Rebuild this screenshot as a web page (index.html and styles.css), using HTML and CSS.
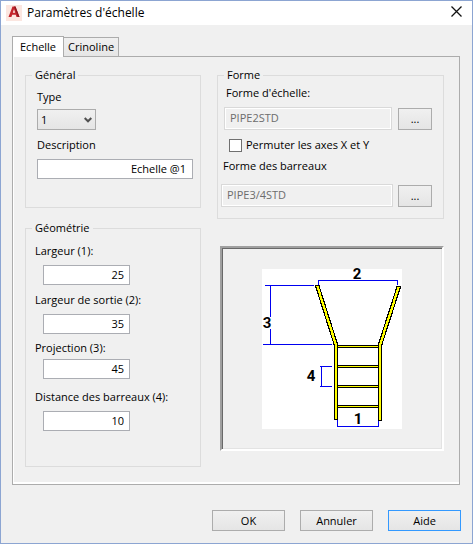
FILE: index.html
```html
<!DOCTYPE html>
<html lang="fr">
<head>
<meta charset="utf-8">
<meta name="viewport" content="width=device-width, initial-scale=1">
<title>Paramètres d'échelle</title>
<link rel="stylesheet" href="styles.css">
</head>
<body>
<form class="dialog">
  <header class="titlebar">
    <svg class="logo" viewBox="0 0 16 16" aria-hidden="true">
      <rect width="16" height="16" fill="#fbe6e0"/>
      <path d="M2.500 12 6.500 1.500h3L13.500 12h-3l-.8-2.300H6.200L5.400 12zM6.800 7.700h2.400L8 4.200z" fill="#c4242b"/>
      <path d="M8 1.500h1.500L13.500 12H12z" fill="#8e1820"/>
    </svg>
    <h1 class="title">Paramètres d'échelle</h1>
    <button class="close" type="button" aria-label="Fermer">
      <svg viewBox="0 0 11 11" aria-hidden="true"><path d="M.5.5l10 10M10.500.5l-10 10" fill="none" stroke="#111" stroke-width="1.300"/></svg>
    </button>
  </header>

  <main class="content">
    <div class="tabs" role="tablist">
      <button class="tab tab-active" type="button" role="tab" aria-selected="true">Echelle</button>
      <button class="tab" type="button" role="tab" aria-selected="false">Crinoline</button>
    </div>
    <div class="panel" role="tabpanel">
      <div class="column">
        <fieldset class="group general">
          <legend>Général</legend>
          <div class="field">
            <label for="type">Type</label>
            <div class="select-wrap">
              <select id="type"><option>1</option></select>
              <svg class="arrow" viewBox="0 0 8 6" aria-hidden="true"><path d="M.7 1 4 4.300 7.300 1" fill="none" stroke="#505050" stroke-width="2"/></svg>
            </div>
          </div>
          <div class="field">
            <label for="description">Description</label>
            <input class="text" id="description" type="text" value="Echelle @1">
          </div>
        </fieldset>

        <fieldset class="group geometry">
          <legend>Géométrie</legend>
          <div class="field">
            <label for="width">Largeur (1):</label>
            <input class="text number" id="width" type="text" value="25">
          </div>
          <div class="field">
            <label for="exit">Largeur de sortie (2):</label>
            <input class="text number" id="exit" type="text" value="35">
          </div>
          <div class="field tight">
            <label for="projection">Projection (3):</label>
            <input class="text number" id="projection" type="text" value="45">
          </div>
          <div class="field">
            <label for="spacing">Distance des barreaux (4):</label>
            <input class="text number" id="spacing" type="text" value="10">
          </div>
        </fieldset>
      </div>

      <div class="column">
        <fieldset class="group shape">
          <legend>Forme</legend>
          <label class="shape-label" for="ladder">Forme d'échelle:</label>
          <div class="picker">
            <input class="readonly" id="ladder" type="text" value="PIPE2STD" disabled>
            <button class="button browse" type="button">...</button>
          </div>
          <label class="check"><input type="checkbox">Permuter les axes X et Y</label>
          <label class="rung-label" for="rung">Forme des barreaux</label>
          <div class="picker rung-picker">
            <input class="readonly" id="rung" type="text" value="PIPE3/4STD" disabled>
            <button class="button browse" type="button">...</button>
          </div>
        </fieldset>

        <div class="preview">
          <svg class="drawing" viewBox="0 0 140 160" role="img" aria-label="Cotes de l'échelle">
            <rect width="140" height="160" fill="#fff"/>
            <g fill="none" stroke="#0000f0" shape-rendering="crispEdges">
              <path d="M56.500 16V11.500h79V16"/>
              <path d="M3 16.500h49M1 75.500h69M8.500 16v32M8.500 60v15"/>
              <path d="M58 97.500h12M58 117.500h12M59.500 97v20"/>
              <path d="M75.500 151v6.500h41V152"/>
            </g>
            <g fill="none" shape-rendering="crispEdges">
              <path d="M55 16 74 76M137 17 118 76" stroke="#000" stroke-width="4.500"/>
              <path d="M55.300 17 74 76M136.700 18 118 76" stroke="#ff0" stroke-width="2.200"/>
              <path d="M76 77.500h41M76 97.500h41M76 117.500h41M76 137.500h41" stroke="#000" stroke-width="3"/>
              <path d="M76 77.500h41M76 97.500h41M76 117.500h41M76 137.500h41" stroke="#ff0"/>
              <path d="M74 75v76M118 75v77" stroke="#000" stroke-width="4"/>
              <path d="M74 75v75M118 75v76" stroke="#ff0" stroke-width="2"/>
            </g>
            <g class="digits">
              <text x="95" y="10">2</text>
              <text x="5" y="59">3</text>
              <text x="49" y="112">4</text>
              <text x="96" y="155">1</text>
            </g>
          </svg>
        </div>
      </div>
    </div>
  </main>

  <footer class="actions">
    <button class="button action" type="button">OK</button>
    <button class="button action" type="button">Annuler</button>
    <button class="button action focused" type="button">Aide</button>
  </footer>
</form>
</body>
</html>
```
FILE: styles.css
```css
* {
  box-sizing: border-box;
}

body {
  margin: 0;
  color: #000;
  font: 11px/16px "Open Sans", "Noto Sans", sans-serif;
}

button,
input,
select {
  margin: 0;
  color: inherit;
  font: inherit;
}

.dialog {
  display: flex;
  flex-direction: column;
  min-height: 100vh;
  border: 1px solid #8ca5d2;
  background: #f0f0f0;
}

.titlebar {
  display: flex;
  align-items: center;
  height: 24px;
  padding: 0 10px 0 5px;
  background: #fff;
}

.logo {
  width: 16px;
  height: 16px;
}

.title {
  flex: 1;
  margin: 0 0 0 5px;
  font-size: 12px;
  font-weight: 400;
}

.close {
  display: flex;
  padding: 0 0 4px;
  border: 0;
  background: none;
}

.close svg {
  width: 11px;
  height: 11px;
}

.content {
  padding: 11px 12px 0 11px;
}

.tabs {
  display: flex;
  align-items: flex-end;
}

.tab {
  height: 19px;
  padding: 0 4px;
  border: 1px solid #acacac;
  border-width: 1px 1px 0 0;
  background: linear-gradient(#f0f0f0, #e6e6e6);
}

.tab-active {
  z-index: 1;
  height: 21px;
  margin-bottom: -1px;
  padding: 0 7px;
  border-left-width: 1px;
  background: #fff;
}

.panel {
  display: grid;
  grid-template-columns: 176fr 227fr;
  column-gap: 16px;
  padding: 10px 15px 17px 12px;
  border: 1px solid #acacac;
  box-shadow: inset 1px -2px #fff;
}

.column {
  display: flex;
  flex-direction: column;
  min-width: 0;
}

.group {
  min-width: 0;
  margin: 0;
  border: 1px solid #dcdcdc;
}

.group legend {
  margin-left: 3px;
  padding: 0 3px;
}

.field {
  display: flex;
  flex-direction: column;
  align-items: flex-start;
  gap: 6px;
}

.text {
  width: 100%;
  height: 20px;
  padding: 0 6px 2px;
  border: 1px solid #abadb3;
  background: #fff;
  text-align: right;
}

.general {
  display: flex;
  flex-direction: column;
  gap: 7px;
  margin-bottom: 12px;
  padding: 6px 7px 28px 3px;
}

.general .field {
  margin-left: 8px;
}

.general .field:first-of-type {
  gap: 4px;
}

.select-wrap {
  position: relative;
}

.select-wrap select {
  width: 59px;
  height: 21px;
  padding: 0 3px;
  border: 1px solid #acacac;
  border-radius: 0;
  background: linear-gradient(#f0f0f0, #e5e5e5);
  appearance: none;
}

.arrow {
  position: absolute;
  top: 8px;
  right: 4px;
  width: 8px;
  height: 6px;
  pointer-events: none;
}

.geometry {
  padding: 7px 7px 35px 3px;
}

.geometry .field {
  margin-left: 6px;
}

.geometry .field + .field {
  margin-top: 7px;
}

.geometry .field.tight {
  gap: 3px;
  margin-top: 6px;
}

.geometry .tight + .field {
  margin-top: 10px;
}

.number {
  width: 87px;
  margin-left: 8px;
  padding: 0 5px 2px;
}

.shape {
  display: flex;
  flex-direction: column;
  align-items: flex-start;
  padding: 2px 11px 11px 3px;
}

.shape-label {
  margin-left: 5px;
}

.picker {
  display: flex;
  align-items: center;
  align-self: stretch;
  gap: 6px;
  margin: 6px 0 0 3px;
}

.rung-picker {
  gap: 5px;
  margin: 10px 0 0;
}

.readonly {
  flex: 1;
  min-width: 0;
  height: 23px;
  padding: 0 5px 2px;
  border: 1px solid #d9d9d9;
  background: #f0f0f0;
  box-shadow: inset 0 0 0 1px #fff;
  color: #6d6d6d;
}

.button {
  padding: 0;
  border: 1px solid #acacac;
  background: linear-gradient(#f0f0f0, #e5e5e5);
}

.browse {
  width: 34px;
  height: 22px;
}

.check {
  display: flex;
  align-items: center;
  gap: 4px;
  margin: 7px 0 0 8px;
}

.check input {
  width: 13px;
  height: 13px;
  border: 1px solid #707070;
  background: #fff;
  appearance: none;
}

.check input:checked {
  background: #707070;
}

.rung-label {
  margin: 5px 0 0 2px;
}

.preview {
  display: flex;
  flex: 1;
  align-items: center;
  justify-content: center;
  margin: 27px 0 16px 3px;
  border: 2px solid;
  border-color: #a0a0a0 #fff #fff #a0a0a0;
  box-shadow: inset 1px 1px #696969, inset -1px -1px #e3e3e3;
}

.drawing {
  width: 140px;
  height: 160px;
  overflow: visible;
}

.digits {
  font: bold 15px Roboto, sans-serif;
  text-anchor: middle;
}

.actions {
  display: flex;
  justify-content: flex-end;
  gap: 15px;
  margin-top: auto;
  padding: 25px 11px 12px;
}

.action {
  width: 73px;
  height: 21px;
}

.focused {
  border-color: #3399ff;
}
```
